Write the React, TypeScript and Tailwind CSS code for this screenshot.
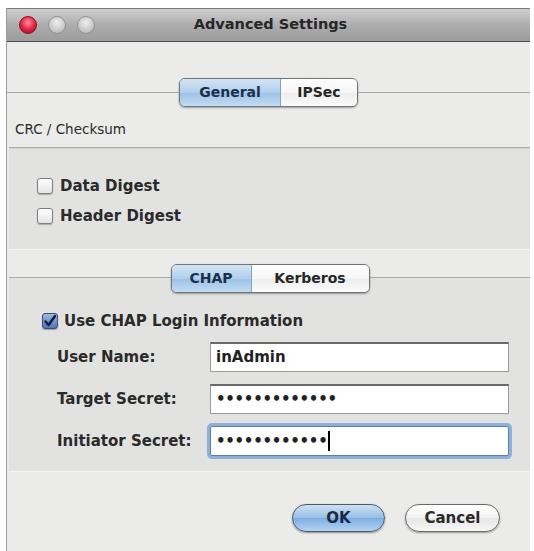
import React from "react";

const font = { fontFamily: '"DejaVu Sans", "Liberation Sans", sans-serif' };

function Segment({ left, right, leftW, rightW }: { left: string; right: string; leftW: number; rightW: number }) {
  return (
    <div className="flex h-[29px] rounded-[6px] border-[1.5px] border-[#6f737a] shadow-[0_1px_2px_rgba(0,0,0,0.35)] overflow-hidden bg-white">
      <div
        className="flex items-center justify-center bg-[linear-gradient(#d3e4f4,#b0cfeb_50%,#9cc1e5_51%,#c2dcf3)] border-r border-[#8aa0b8] text-[14px] font-bold text-[#1c2f4d]"
        style={{ width: leftW }}
      >
        {left}
      </div>
      <div
        className="flex items-center justify-center bg-[linear-gradient(#ffffff,#f5f5f5_50%,#ededed_51%,#fafafa)] text-[14px] font-bold text-[#262626]"
        style={{ width: rightW }}
      >
        {right}
      </div>
    </div>
  );
}

function Checkbox({ checked }: { checked?: boolean }) {
  if (checked) {
    return (
      <div className="w-[16px] h-[16px] rounded-[3px] border border-[#3b4f78] bg-[linear-gradient(#9db8e0,#4f74b8)] flex items-center justify-center shadow-[0_1px_1px_rgba(0,0,0,0.3)]">
        <svg width="14" height="14" viewBox="0 0 14 14">
          <path d="M2.5 7.5 L5.5 11 L12 2" fill="none" stroke="#0f1a3a" strokeWidth="2.4" strokeLinecap="round" strokeLinejoin="round" />
        </svg>
      </div>
    );
  }
  return (
    <div className="w-[16px] h-[16px] rounded-[3px] border border-[#7d7d7d] bg-[linear-gradient(#ffffff,#e4e4e4)] shadow-[0_1px_1px_rgba(0,0,0,0.25)]" />
  );
}

function Field({ label, value, focused, caret }: { label: string; value: string; focused?: boolean; caret?: boolean }) {
  return (
    <div className="flex items-center h-[30px]">
      <div className="w-[201px] pl-[48px] text-[15px] font-bold text-[#2a2a2a] whitespace-nowrap">{label}</div>
      <div
        className={
          "flex-1 h-[30px] bg-white flex items-center pl-[5px] text-[15px] text-[#222] " +
          (focused
            ? "border border-[#5a7fb0] shadow-[0_0_0_3px_#8fb0d8] rounded-[2px]"
            : "border border-[#9a9a9a] border-t-[#6a6a6a] border-t-2")
        }
      >
        <span className={value.startsWith("•") ? "tracking-[-0.3px] font-bold text-[15px]" : "font-semibold"}>{value}</span>
        {caret && <span className="w-[1.5px] h-[20px] bg-black ml-[1px]" />}
      </div>
    </div>
  );
}

export default function App() {
  return (
    <div className="w-[534px] h-[551px] bg-white pt-[8px] pl-[6px] overflow-hidden" style={font}>
      <div className="w-[524px] h-[543px] flex flex-col border-l border-[#9a9a9a] bg-[#ebebea]">
        {/* Title bar */}
        <div className="h-[34px] shrink-0 relative flex items-center bg-[linear-gradient(#cfcfcf,#adadad_50%,#9c9c9c)] border-t border-[#7a7a7a] border-b border-b-[#4a4a4a]">
          <div className="flex items-center gap-[11px] pl-[12px]">
            <div className="w-[18px] h-[18px] rounded-full bg-[radial-gradient(circle_at_50%_35%,#ff8a9a,#e0213f_55%,#a5081f)] border border-[#8a1024]" />
            <div className="w-[18px] h-[18px] rounded-full bg-[radial-gradient(circle_at_50%_35%,#eeeeee,#c8c8c8_60%,#adadad)] border border-[#929292]" />
            <div className="w-[18px] h-[18px] rounded-full bg-[radial-gradient(circle_at_50%_35%,#eeeeee,#c8c8c8_60%,#adadad)] border border-[#929292]" />
          </div>
          <div className="absolute inset-0 flex items-center justify-center pl-[4px] text-[14.5px] font-bold text-[#262626] pointer-events-none">
            Advanced Settings
          </div>
        </div>

        {/* Top tabs */}
        <div className="mt-[36px] flex items-center">
          <div className="flex-1 h-px bg-[#a8a8a8]" />
          <Segment left="General" right="IPSec" leftW={101} rightW={76} />
          <div className="flex-1 h-px bg-[#a8a8a8]" />
        </div>
        <div className="mt-[14px] h-[16px] leading-[16px] pl-[8px] text-[13.5px] text-[#2a2a2a]">CRC / Checksum</div>

        {/* Group 1 */}
        <div className="mt-[10px] ml-[2px] bg-[#e2e2e1] border-t border-[#a9a9a9] border-b border-b-[#f4f4f4] shadow-[inset_0_1px_1px_rgba(0,0,0,0.08)] pt-[27px] pb-[22px] pl-[28px] flex flex-col gap-[8px]">
          <div className="flex items-center gap-[7px] h-[22px]">
            <Checkbox />
            <span className="text-[15px] font-bold text-[#2a2a2a]">Data Digest</span>
          </div>
          <div className="flex items-center gap-[7px] h-[22px]">
            <Checkbox />
            <span className="text-[15px] font-bold text-[#2a2a2a]">Header Digest</span>
          </div>
        </div>

        {/* Group 2 */}
        <div className="mt-[27px] ml-[2px] bg-[#e2e2e1] border-t border-[#a9a9a9] border-b border-b-[#f4f4f4] pb-[15px] pr-[21px]">
          <div className="-mt-[14px] flex justify-center pl-[22px]">
            <Segment left="CHAP" right="Kerberos" leftW={80} rightW={117} />
          </div>
          <div className="mt-[17px] flex items-center gap-[6px] h-[22px] pl-[33px]">
            <Checkbox checked />
            <span className="text-[15px] font-bold text-[#2a2a2a]">Use CHAP Login Information</span>
          </div>
          <div className="mt-[10px] flex flex-col gap-[12px]">
            <Field label="User Name:" value="inAdmin" />
            <Field label="Target Secret:" value="•••••••••••••" />
            <Field label="Initiator Secret:" value="••••••••••••" focused caret />
          </div>
        </div>

        {/* Buttons */}
        <div className="mt-[32px] flex justify-end gap-[20px] pr-[30px]">
          <button className="w-[93px] h-[28px] rounded-full border-[1.5px] border-[#4d5a6e] bg-[linear-gradient(#cfe1f3,#97bde6_50%,#7eaee2_51%,#b3d3f2)] shadow-[0_1px_2px_rgba(0,0,0,0.4)] text-[15px] font-bold text-[#1a2a44]">
            OK
          </button>
          <button className="w-[95px] h-[28px] rounded-full border-[1.5px] border-[#6a6a6a] bg-[linear-gradient(#ffffff,#f2f2f2_50%,#e6e6e6_51%,#f7f7f7)] shadow-[0_1px_2px_rgba(0,0,0,0.35)] text-[15px] font-bold text-[#2a2a2a]">
            Cancel
          </button>
        </div>
      </div>
    </div>
  );
}
